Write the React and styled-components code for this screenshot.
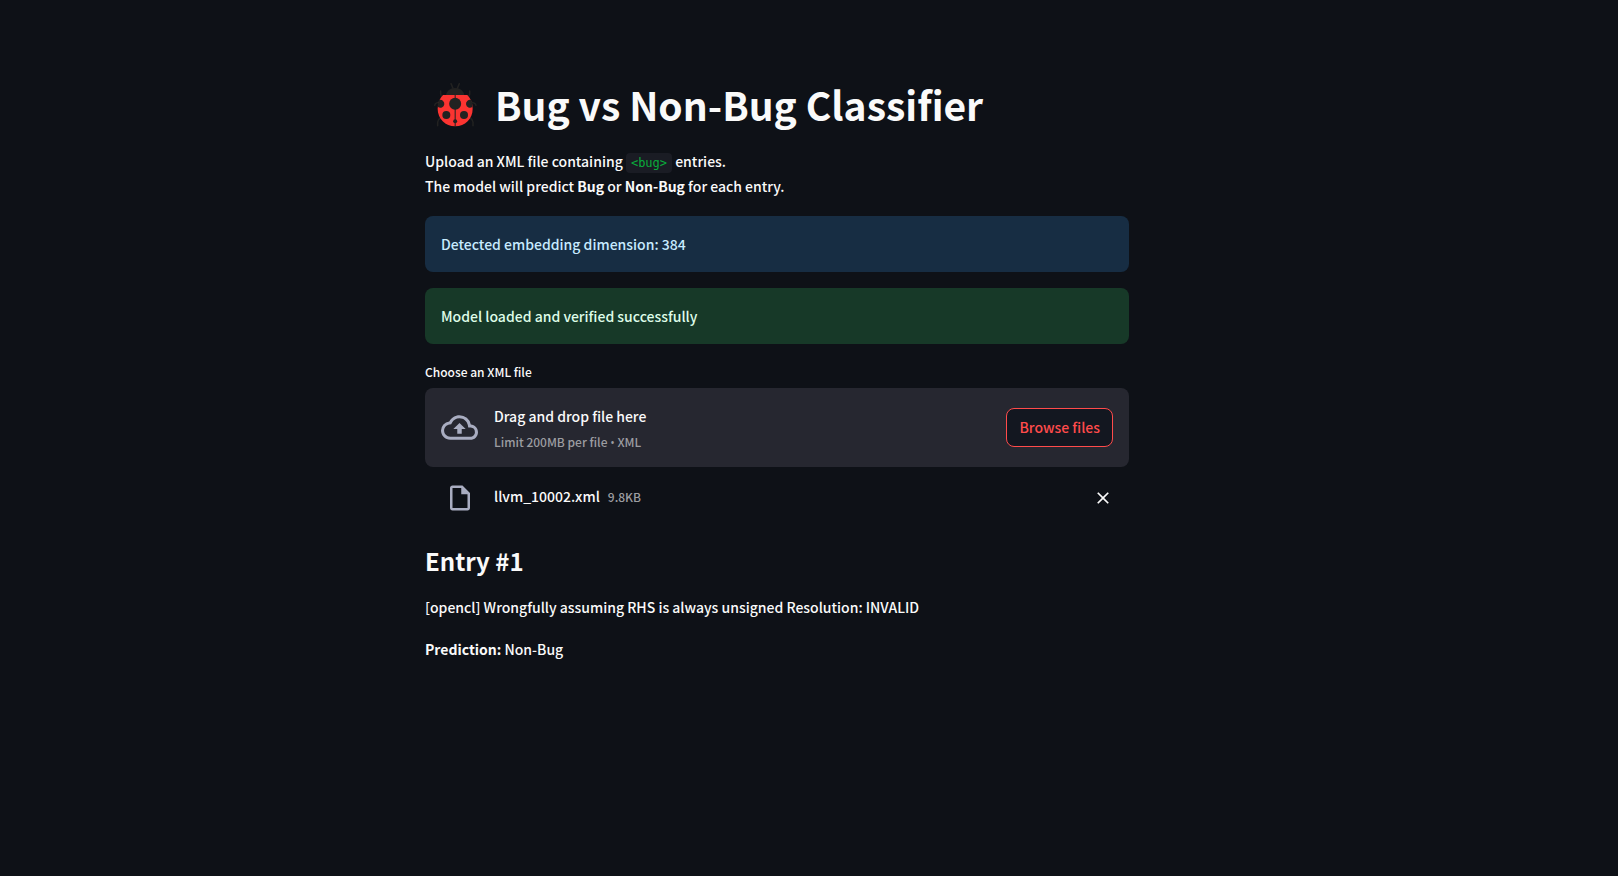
import React, { useRef } from "react";
import styled, { createGlobalStyle } from "styled-components";
import { MdOutlineCloudUpload, MdOutlineInsertDriveFile, MdClose } from "react-icons/md";

const GlobalStyle = createGlobalStyle`
  *, *::before, *::after { box-sizing: border-box; }
  body {
    margin: 0;
    background: #0e1117;
    color: #fafafa;
    font-family: "Noto Sans CJK SC", "Open Sans", sans-serif;
    font-size: 14px;
    font-weight: 500;
    line-height: 25px;
  }
`;

const Main = styled.main`
  display: flex;
  justify-content: center;
  min-height: 100vh;
  padding: 80px 80px 80px 16px;
`;

const Column = styled.div`
  display: flex;
  flex-direction: column;
  gap: 16px;
  width: 100%;
  max-width: 704px;
`;

const Title = styled.h1`
  display: flex;
  align-items: center;
  gap: 10px;
  margin: 0 0 5px;
  font-size: 39px;
  line-height: 48px;
  font-weight: 700;
`;

const BugIcon = styled.svg`
  flex: none;
  width: 60px;
  height: 45px;
`;

const Paragraph = styled.p`
  margin: 0;
  padding-bottom: 1px;
`;

const Code = styled.code`
  padding: 3px 5px;
  border-radius: 4px;
  background: #1a1c24;
  color: #09ab3b;
  font-family: "DejaVu Sans Mono", monospace;
  font-size: 12px;
  font-weight: 400;
  line-height: 16px;
`;

const tones = {
  info: { background: "#172d43", color: "#c7ebff" },
  success: { background: "#173928", color: "#dffde9" },
};

const Alert = styled.div`
  padding: 16px;
  border-radius: 8px;
  line-height: 24px;
  background: ${({ $tone }) => tones[$tone].background};
  color: ${({ $tone }) => tones[$tone].color};
`;

const Uploader = styled.section`
  display: flex;
  flex-direction: column;
`;

const FieldLabel = styled.label`
  margin-bottom: 4px;
  font-size: 12px;
  line-height: 24px;
`;

const DropZone = styled.div`
  display: flex;
  align-items: center;
  gap: 16px;
  padding: 12px 16px;
  border-radius: 8px;
  background: #262730;
`;

const IconSlot = styled.span`
  display: flex;
  flex: none;
  justify-content: center;
  width: 37px;
  color: #a9adc1;
`;

const DropText = styled.div`
  display: flex;
  flex: 1;
  flex-direction: column;
  gap: 1px;
  padding-top: 4px;
`;

const Small = styled.span`
  color: #9c9da1;
  font-size: 12px;
  line-height: 24px;
`;

const Bullet = styled.span`
  font-family: "Open Sans", sans-serif;
`;

const BrowseButton = styled.button`
  height: 39px;
  padding: 0 12px;
  border: 1px solid #ff4b4b;
  border-radius: 8px;
  background: #131720;
  color: #ff4b4b;
  font: inherit;
  cursor: pointer;
`;

const FileRow = styled.div`
  display: flex;
  align-items: center;
  gap: 16px;
  padding: 16px 16px 0;
`;

const FileInfo = styled.div`
  display: flex;
  flex: 1;
  align-items: baseline;
  gap: 8px;
  padding-bottom: 3px;
`;

const RemoveButton = styled.button`
  display: flex;
  padding: 0;
  border: 0;
  background: none;
  color: #fafafa;
  cursor: pointer;
`;

const EntryTitle = styled.h2`
  margin: 15px 0 1px;
  font-size: 24px;
  line-height: 34px;
  font-weight: 700;
`;

const Ladybug = () => (
  <BugIcon viewBox="15 18 180 135" aria-hidden="true">
    <g fill="none" stroke="#222221" strokeWidth="4.5" strokeLinecap="round" strokeLinejoin="round">
      <path d="M93 23l6 14M118 23l-6 14" />
      <path d="M62 45v9q0 7 10 12M149 45v9q0 7-10 12" />
      <path d="M44 88q2-9 18-9M168 88q-2-9-19-9" />
      <path d="M53 149v-10q0-8 8-13M159 149v-10q0-8-8-13" />
    </g>
    <path fill="#222221" d="M78 60C78 46 90 36 105.500 36S133 46 133 60z" />
    <path fill="#fb3431" d="M69 57H142C152 67 158 82 158 98 158 128 135 151 105.500 151S53 128 53 98C53 82 59 67 69 57z" />
    <g fill="#222221">
      <rect x="104" y="57" width="3" height="95" />
      <circle cx="105.500" cy="83" r="18" />
      <circle cx="79" cy="117" r="12" />
      <circle cx="132" cy="117" r="12" />
      <circle cx="105.500" cy="136" r="6" />
      <path d="M57 72A12 12 0 1 1 54 93Q52 83 57 72zM154 72A12 12 0 1 0 157 93Q159 83 154 72z" />
    </g>
  </BugIcon>
);

export default function App() {
  const input = useRef(null);
  return (
    <>
      <GlobalStyle />
      <Main>
        <Column>
          <Title>
            <Ladybug />
            <span>Bug vs Non-Bug Classifier</span>
          </Title>
          <Paragraph>
            Upload an XML file containing <Code>&lt;bug&gt;</Code> entries.
            <br />
            The model will predict <strong>Bug</strong> or <strong>Non-Bug</strong> for each entry.
          </Paragraph>
          <Alert $tone="info" role="status">Detected embedding dimension: 384</Alert>
          <Alert $tone="success" role="status">Model loaded and verified successfully</Alert>
          <Uploader>
            <FieldLabel htmlFor="xml-file">Choose an XML file</FieldLabel>
            <DropZone>
              <IconSlot><MdOutlineCloudUpload size={37} /></IconSlot>
              <DropText>
                <span>Drag and drop file here</span>
                <Small>Limit 200MB per file <Bullet>•</Bullet> XML</Small>
              </DropText>
              <BrowseButton type="button" onClick={() => input.current.click()}>Browse files</BrowseButton>
              <input ref={input} id="xml-file" type="file" accept=".xml" hidden />
            </DropZone>
            <FileRow>
              <IconSlot><MdOutlineInsertDriveFile size={30} /></IconSlot>
              <FileInfo>
                <span>llvm_10002.xml</span>
                <Small>9.8KB</Small>
              </FileInfo>
              <RemoveButton type="button" aria-label="Remove llvm_10002.xml"><MdClose size={20} /></RemoveButton>
            </FileRow>
          </Uploader>
          <EntryTitle>Entry #1</EntryTitle>
          <Paragraph>[opencl] Wrongfully assuming RHS is always unsigned Resolution: INVALID</Paragraph>
          <Paragraph><strong>Prediction:</strong> Non-Bug</Paragraph>
        </Column>
      </Main>
    </>
  );
}
